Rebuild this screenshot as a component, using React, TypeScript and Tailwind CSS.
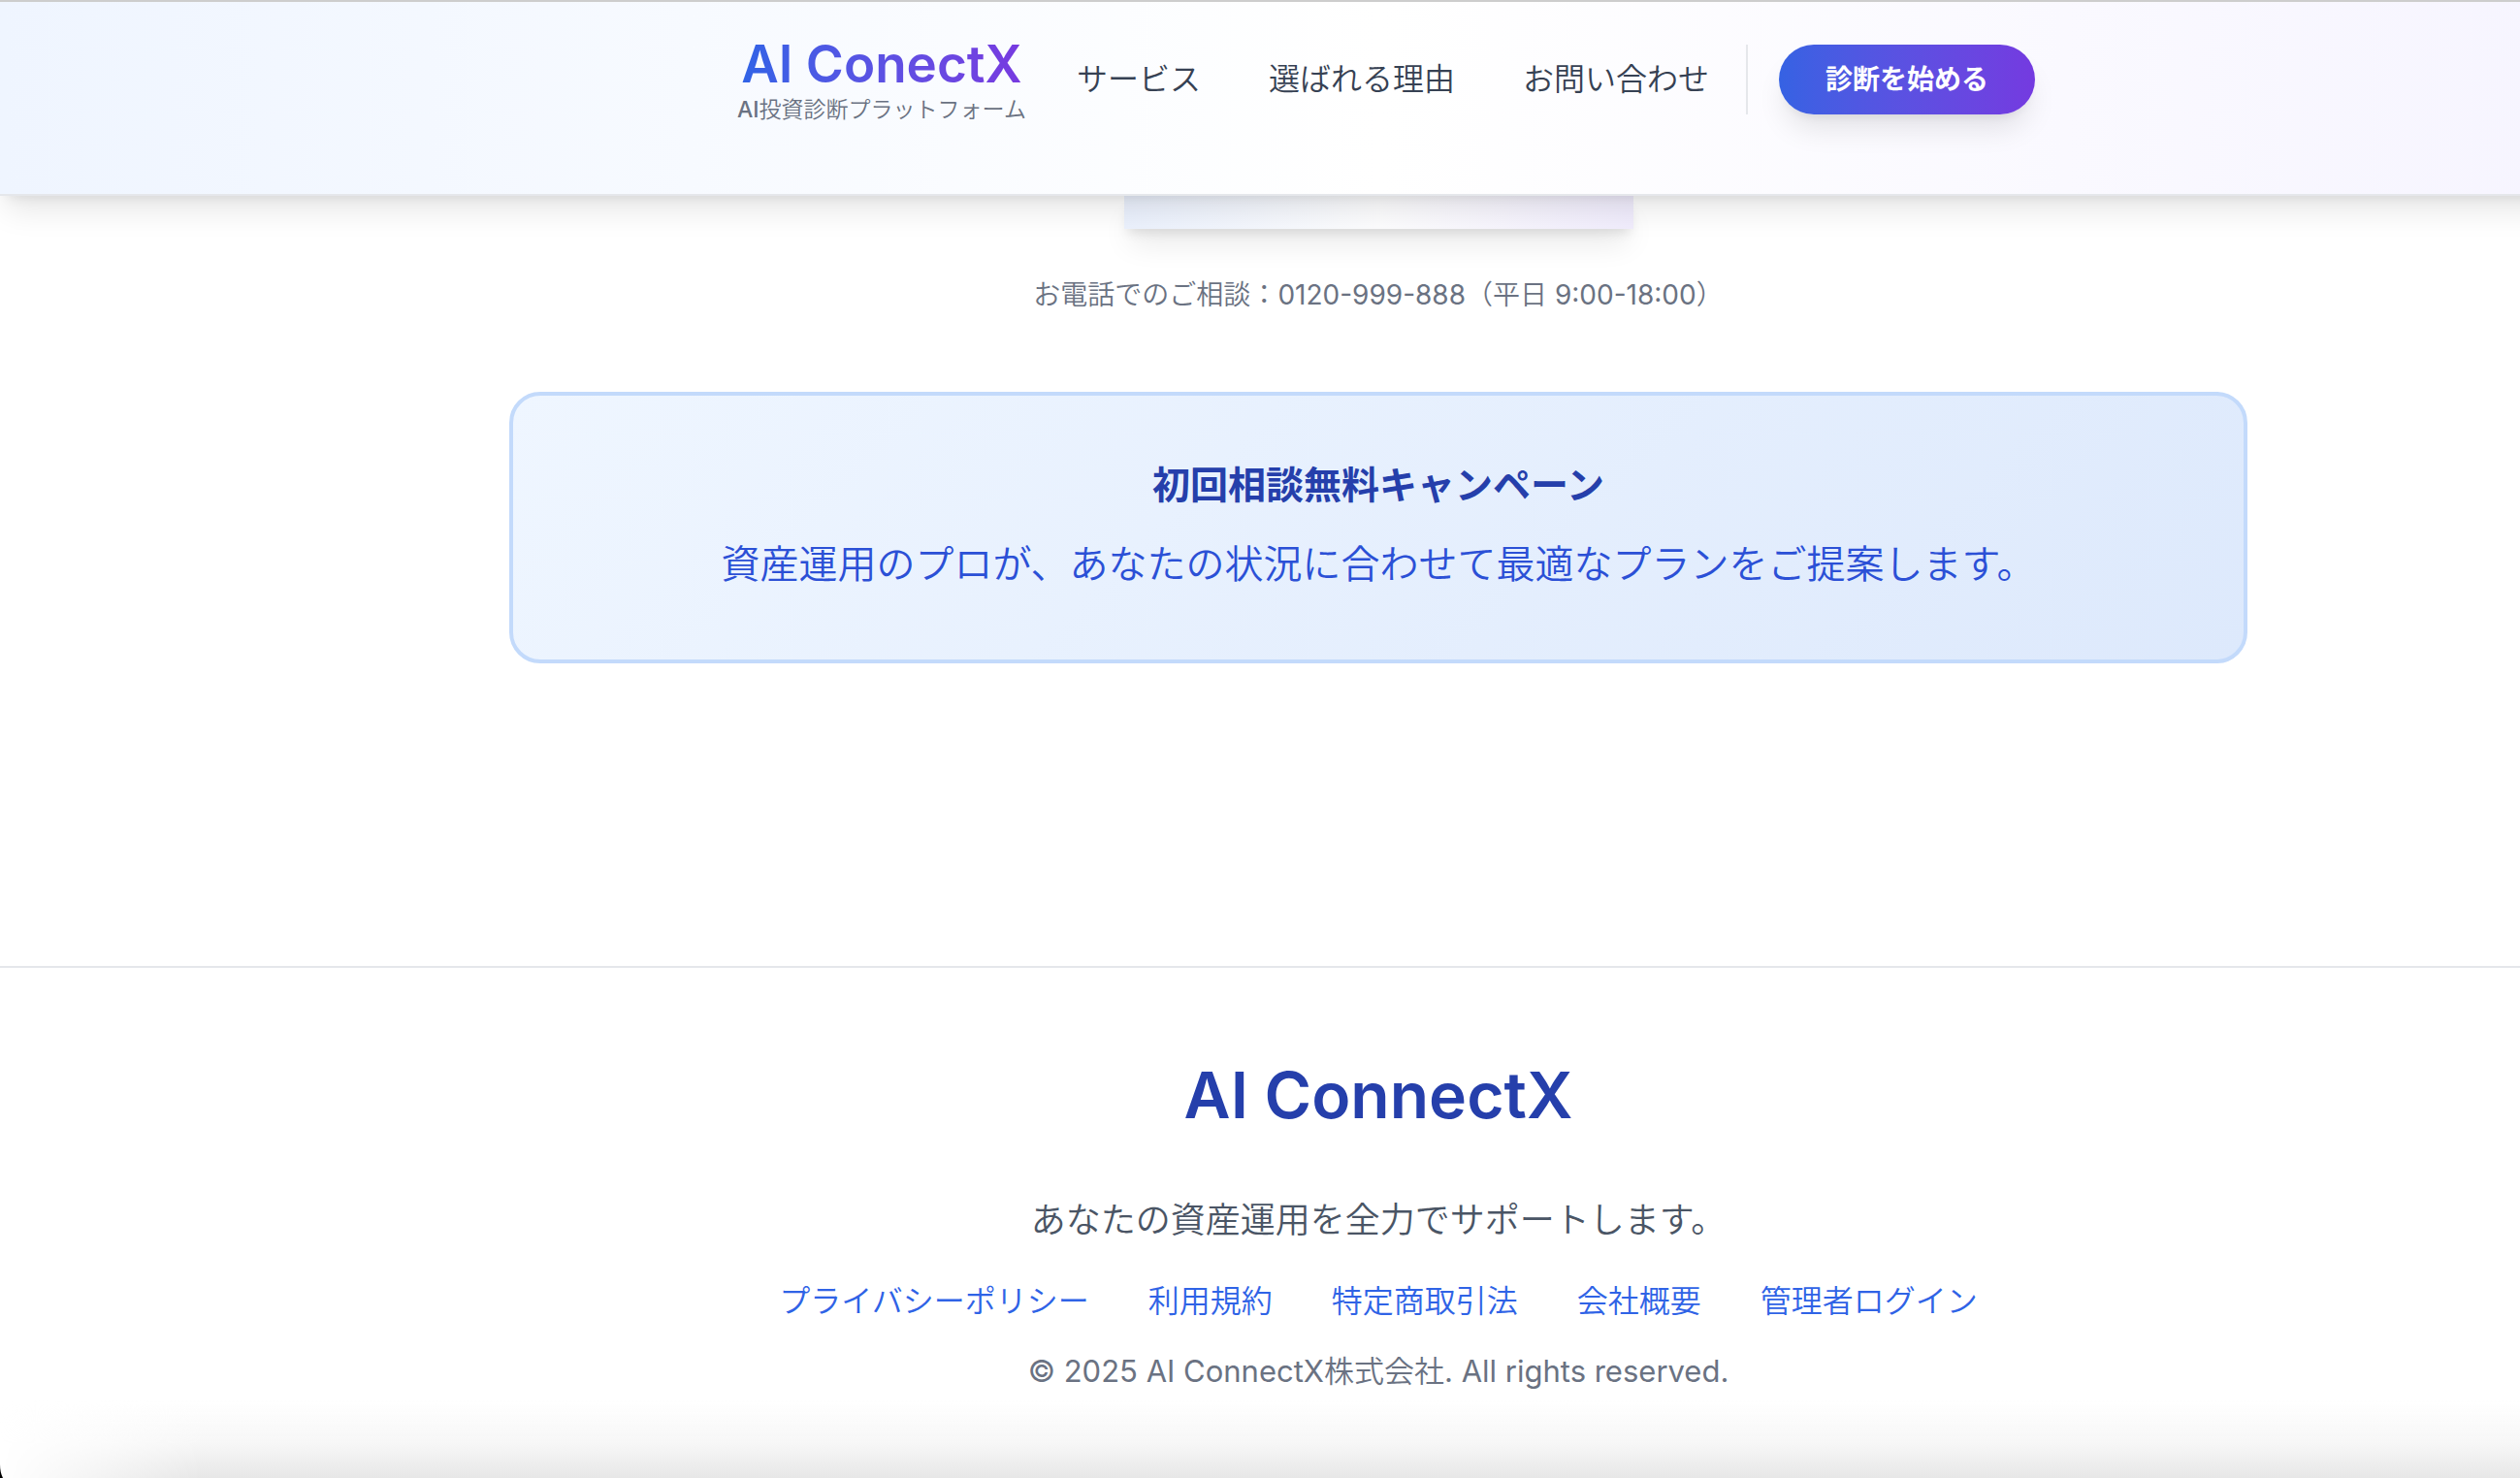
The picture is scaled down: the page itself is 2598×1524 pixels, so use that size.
const navItems = ['サービス', '選ばれる理由', 'お問い合わせ'];

const footerLinks = [
  'プライバシーポリシー',
  '利用規約',
  '特定商取引法',
  '会社概要',
  '管理者ログイン',
];

function Header() {
  return (
    <header className="relative z-10 border-y-2 border-t-[#cdcdcd] border-b-gray-200 bg-linear-to-r from-[#eff5ff] via-white to-[#f5f3ff] pb-[71px] pl-4 shadow-[0_20px_30px_-6px_rgba(0,0,0,0.1),0_8px_12px_-8px_rgba(0,0,0,0.1)]">
      <div className="flex items-start justify-center pt-9">
        <a href="#top" className="mr-[52px] flex flex-col items-center">
          <span className="bg-linear-to-r from-[#2f63e6] to-[#773ae0] bg-clip-text text-[53px] leading-[56px] font-semibold text-transparent">
            AI ConectX
          </span>
          <span className="mt-[3px] text-[23px] leading-8 text-gray-500">
            <span className="font-medium">AI</span>
            <span className="font-[350]">投資診断プラットフォーム</span>
          </span>
        </a>
        <nav className="mt-2 flex h-[72px] items-center gap-[70px] border-r-2 border-gray-200 pr-[38px]">
          {navItems.map((item) => (
            <a key={item} href="#nav" className="text-[32px] leading-10 font-[350] text-gray-700">
              {item}
            </a>
          ))}
        </nav>
        <button
          type="button"
          className="mt-2 ml-8 h-[72px] rounded-full bg-linear-to-r from-[#3562e3] to-[#743ae0] px-12 text-[28px] font-bold text-white shadow-[0_20px_30px_-6px_rgba(0,0,0,0.1),0_8px_12px_-8px_rgba(0,0,0,0.1)]"
        >
          診断を始める
        </button>
      </div>
    </header>
  );
}

function Consultation() {
  return (
    <main className="flex flex-col items-center">
      <div className="h-[34px] w-[525px] bg-linear-to-r from-[#ebf1fd] via-[#fdfdfe] to-[#f1edfd] shadow-[0_20px_30px_-6px_rgba(0,0,0,0.1),0_8px_12px_-4px_rgba(0,0,0,0.1)]" />
      <p className="mt-12 text-[28px] leading-10 font-[350] text-gray-500">
        お電話でのご相談：<span className="font-normal">0120-999-888</span>（平日{' '}
        <span className="font-normal">9:00-18:00</span>）
      </p>
      <section className="mt-20 w-full max-w-[1792px] rounded-[32px] border-4 border-[#c3dafb] bg-linear-135 from-[#eff6ff] to-[#dde9fc] pt-16 pb-[68px] text-center">
        <h2 className="text-[39px] leading-[56px] font-bold text-[#253fab]">
          初回相談無料キャンペーン
        </h2>
        <p className="mt-6 text-[40px] leading-[60px] font-[350] text-[#2b50d6]">
          資産運用のプロが、あなたの状況に合わせて最適なプランをご提案します。
        </p>
      </section>
    </main>
  );
}

function Footer() {
  return (
    <footer className="mt-[312px] border-t-2 border-gray-200 pt-[93px] text-center">
      <h2 className="text-[66px] leading-[76px] font-semibold text-[#253fab]">AI ConnectX</h2>
      <p className="mt-[63px] text-[36px] leading-[56px] font-[350] text-gray-600">
        あなたの資産運用を全力でサポートします。
      </p>
      <nav className="mt-8 flex justify-center gap-[61px]">
        {footerLinks.map((link) => (
          <a key={link} href="#footer" className="text-[32px] leading-12 font-[350] text-[#2f63e6]">
            {link}
          </a>
        ))}
      </nav>
      <p className="mt-6 text-[31px] leading-12 text-gray-500">
        © 2025 AI ConnectX<span className="font-[350]">株式会社</span>. All rights reserved.
      </p>
    </footer>
  );
}

export default function App() {
  return (
    <div
      lang="ja"
      className="relative h-screen overflow-hidden bg-white font-['Inter','Noto_Sans_CJK_JP',sans-serif]"
    >
      {/* The page is wider than the window and runs off its right edge */}
      <div className="-mr-[244px]">
        <Header />
        <Consultation />
        <Footer />
      </div>
      <div className="pointer-events-none absolute inset-x-0 bottom-0 h-20 bg-linear-to-t from-[#e7e7e7] via-[#f7f7f7] via-45% to-transparent mask-l-from-92%" />
      <svg className="absolute bottom-0 left-0 h-[14px] w-[3px]" viewBox="0 0 3 14" aria-hidden="true">
        <path d="M0 0Q0 8 3 14H0Z" fill="#000" />
      </svg>
    </div>
  );
}
